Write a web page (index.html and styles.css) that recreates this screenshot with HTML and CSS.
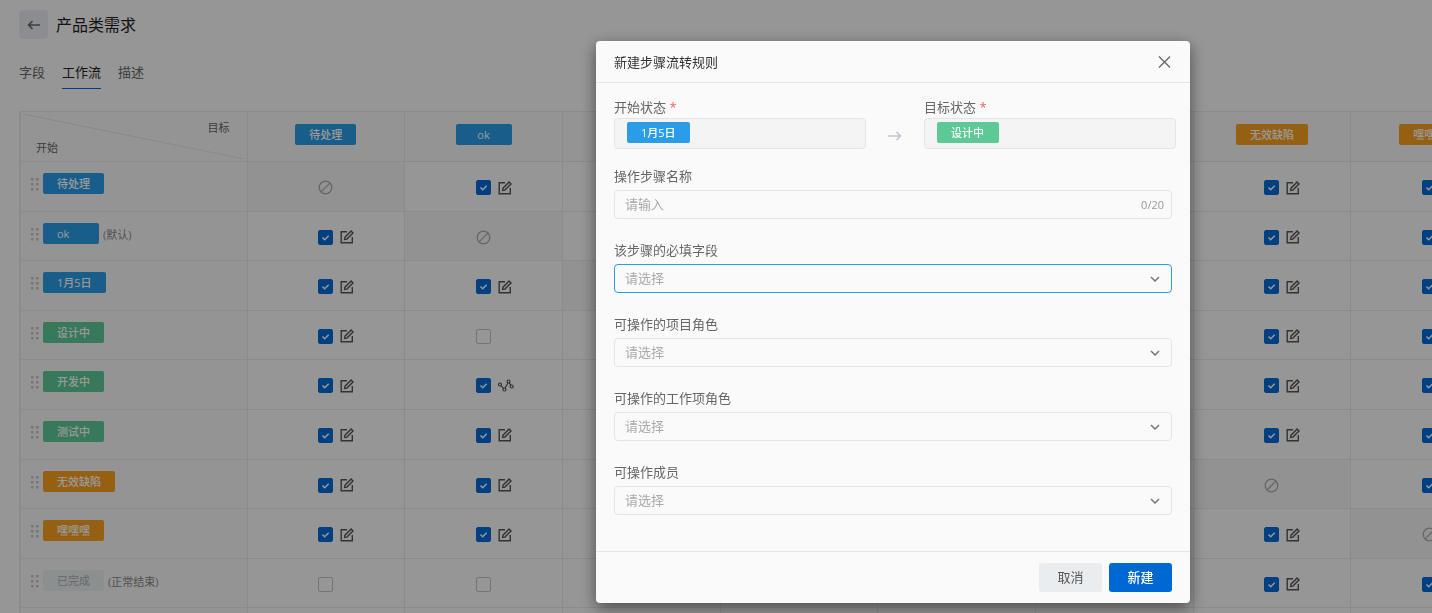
FILE: index.html
```html
<!DOCTYPE html>
<html lang="zh-CN">
<head>
    <meta charset="UTF-8">
    <meta name="viewport" content="width=device-width, initial-scale=1.0">
    <title>产品类需求 - 工作流</title>
    <link rel="stylesheet" href="styles.css">
</head>
<body>
    <div class="page">
        <header class="page-header">
            <button type="button" class="back" aria-label="返回">
                <svg width="14" height="12" viewBox="0 0 14 12"><path d="M13 6H1.5M5.5 2L1.5 6l4 4"/></svg>
            </button>
            <h1>产品类需求</h1>
        </header>
        <nav class="tabs">
            <a href="#fields">字段</a>
            <a href="#workflow" class="active">工作流</a>
            <a href="#desc">描述</a>
        </nav>
        <div class="table-wrap">
            <table class="flow">
                <thead>
                    <tr id="flow-head">
                        <th class="corner">
                            <div class="corner-inner">
                                <span class="corner-target">目标</span>
                                <span class="corner-start">开始</span>
                            </div>
                        </th>
                    </tr>
                </thead>
                <tbody id="flow-body"></tbody>
            </table>
        </div>
    </div>

    <div class="overlay">
        <form class="modal" role="dialog" aria-labelledby="modal-title">
            <div class="modal-header">
                <h2 id="modal-title">新建步骤流转规则</h2>
                <button type="button" class="close" aria-label="关闭">
                    <svg width="14" height="12" viewBox="0 0 14 12"><path d="M1 .5l11 11M12 .5l-11 11"/></svg>
                </button>
            </div>
            <div class="modal-body">
                <div class="states">
                    <div class="state">
                        <div class="label">开始状态 <span class="required">*</span></div>
                        <div class="state-box"><span class="tag blue">1月5日</span></div>
                    </div>
                    <svg class="arrow" width="14" height="10" viewBox="0 0 14 10"><path d="M0 5h12.500M8.500 1l4 4-4 4"/></svg>
                    <div class="state">
                        <div class="label">目标状态 <span class="required">*</span></div>
                        <div class="state-box"><span class="tag green">设计中</span></div>
                    </div>
                </div>
                <div class="field">
                    <label class="label" for="step-name">操作步骤名称</label>
                    <div class="control">
                        <input type="text" id="step-name" maxlength="20" placeholder="请输入">
                        <span class="count">0/20</span>
                    </div>
                </div>
                <div class="field">
                    <label class="label" for="required-fields">该步骤的必填字段</label>
                    <div class="control focused">
                        <select id="required-fields"><option>请选择</option></select>
                        <svg class="chevron" width="10" height="6" viewBox="0 0 10 6"><path d="M1 1l4 4 4-4"/></svg>
                    </div>
                </div>
                <div class="field">
                    <label class="label" for="project-role">可操作的项目角色</label>
                    <div class="control">
                        <select id="project-role"><option>请选择</option></select>
                        <svg class="chevron" width="10" height="6" viewBox="0 0 10 6"><path d="M1 1l4 4 4-4"/></svg>
                    </div>
                </div>
                <div class="field">
                    <label class="label" for="item-role">可操作的工作项角色</label>
                    <div class="control">
                        <select id="item-role"><option>请选择</option></select>
                        <svg class="chevron" width="10" height="6" viewBox="0 0 10 6"><path d="M1 1l4 4 4-4"/></svg>
                    </div>
                </div>
                <div class="field">
                    <label class="label" for="members">可操作成员</label>
                    <div class="control">
                        <select id="members"><option>请选择</option></select>
                        <svg class="chevron" width="10" height="6" viewBox="0 0 10 6"><path d="M1 1l4 4 4-4"/></svg>
                    </div>
                </div>
            </div>
            <div class="modal-footer">
                <button type="button" class="btn">取消</button>
                <button type="button" class="btn primary">新建</button>
            </div>
        </form>
    </div>
    <script src="script.js"></script>
</body>
</html>
```
FILE: styles.css
```css
* {
    box-sizing: border-box;
}
body {
    margin: 0;
    background-color: #fafafa;
    color: #333;
    font-family: 'Open Sans', 'Noto Sans CJK SC', sans-serif;
    font-size: 13px;
    line-height: 20px;
    overflow: hidden;
}
h1, h2 {
    margin: 0;
    font-weight: 400;
}
button, input, select {
    font: inherit;
}
svg {
    display: block;
    fill: none;
    stroke: currentColor;
}
.page {
    padding: 10px 0 0 19px;
}
.page-header {
    display: flex;
    align-items: center;
    gap: 8px;
}
.page-header h1 {
    font-size: 16px;
    line-height: 28px;
    color: #222;
}
.back {
    display: flex;
    align-items: center;
    justify-content: center;
    width: 29px;
    height: 29px;
    padding: 0;
    border: none;
    border-radius: 4px;
    background-color: #e9ecf0;
    color: #666;
}
.back svg {
    stroke-width: 1.6;
}
.tabs {
    display: flex;
    gap: 17px;
    margin: 23px 0 22px;
}
.tabs a {
    height: 27px;
    color: #666;
    text-decoration: none;
}
.tabs a.active {
    color: #222;
    border-bottom: 1px solid #006ad4;
}

/* transition matrix */
.table-wrap {
    overflow: hidden;
}
.flow {
    width: 1490px;
    height: 547px;
    table-layout: fixed;
    border-collapse: collapse;
    border-left: 2px solid #e4e9ea;
}
.flow th, .flow td {
    padding: 0;
    border: 1px solid #e8e8e8;
    font-weight: 400;
    vertical-align: top;
}
.flow thead th {
    height: 50px;
    padding-top: 12px;
    background-color: #f7f7f7;
    text-align: center;
}
.flow thead th.corner {
    width: 227px;
    padding: 2px 3px 2px 2px;
}
.flow tbody tr {
    height: 49px;
}
.corner-inner {
    display: flex;
    justify-content: space-between;
    flex-direction: column;
    height: 45px;
    padding: 4px 14px 1px 13px;
    font-size: 11px;
    color: #666;
    background: linear-gradient(to top right, transparent calc(50% - 1px), #e4e4e4 50%, transparent calc(50% + 1px));
}
.corner-target {
    align-self: flex-end;
}
.corner-start {
    align-self: flex-start;
}
.flow tbody th {
    background-color: #f7f7f7;
    text-align: left;
}
.row-name {
    display: flex;
    align-items: flex-start;
    padding: 11px 0 0 9px;
}
.drag {
    margin: 5px 4px 0 0;
    fill: #c4c5ca;
    stroke: none;
}
.note {
    margin: 2px 0 0 4px;
    font-size: 11px;
    color: #888;
}
.tag {
    display: inline-block;
    min-width: 56px;
    height: 21px;
    padding: 0 14px;
    border-radius: 2px;
    font-size: 11px;
    font-weight: 500;
    line-height: 21px;
    color: #fff;
    white-space: nowrap;
    vertical-align: top;
}
.blue {
    background-color: #2b9de8;
}
.green {
    background-color: #5dca96;
}
.orange {
    background-color: #f9a01f;
}
.gray {
    background-color: #e9eef0;
    color: #a8adb3;
    font-weight: 400;
}
.flow td.self {
    background-color: #f4f4f4;
}
.cell {
    display: grid;
    grid-template-columns: 1fr 15px 1fr;
    column-gap: 7px;
    align-items: center;
    padding-top: 18px;
    color: #555;
}
.cell > :first-child {
    grid-column: 2;
}
.cell input {
    appearance: none;
    width: 15px;
    height: 15px;
    margin: 0;
    border: 1px solid #c0c2c6;
    border-radius: 2px;
}
.cell input:checked {
    border-color: #006cd8;
    background: #006cd8 url("data:image/svg+xml,%3Csvg xmlns='http://www.w3.org/2000/svg' viewBox='0 0 13 13'%3E%3Cpath d='M3.500 6.500l2.200 2.200 4-4' fill='none' stroke='white' stroke-width='1.500'/%3E%3C/svg%3E");
}
.forbid {
    color: #aaa;
    stroke-width: 1.3;
}
.edit {
    stroke-width: 1.4;
}

/* dialog */
.overlay {
    position: fixed;
    inset: 0;
    display: flex;
    align-items: flex-start;
    justify-content: flex-end;
    padding: 41px 242px 0 0;
    background-color: rgba(0, 0, 0, 0.4);
}
.modal {
    width: 594px;
    border-radius: 4px;
    background-color: #fafafa;
    box-shadow: 0 5px 16px rgba(0, 0, 0, 0.5);
}
.modal-header {
    display: flex;
    align-items: center;
    justify-content: space-between;
    height: 42px;
    padding: 0 18px;
    border-bottom: 1px solid #e2e6ea;
}
.modal-header h2 {
    font-size: 13px;
}
.close {
    padding: 0;
    border: none;
    background: none;
    color: #666;
}
.close svg {
    stroke-width: 1.3;
}
.modal-body {
    padding: 15px 18px 36px;
}
.states {
    display: flex;
    justify-content: space-between;
    margin-right: -4px;
    margin-bottom: 18px;
}
.state {
    width: 252px;
}
.state-box {
    height: 31px;
    padding: 3px 12px;
    border: 1px solid #e5e5e5;
    border-radius: 4px;
    background-color: #f4f4f4;
}
.state-box .tag {
    min-width: 62px;
}
.arrow {
    margin-top: 33px;
    color: #c3c6cf;
    stroke-width: 1.6;
}
.label {
    display: block;
    height: 20px;
    line-height: 18px;
    color: #666;
}
.required {
    color: #f0655c;
}
.field + .field {
    margin-top: 22px;
}
.control {
    display: flex;
    align-items: center;
    height: 29px;
    margin-top: 3px;
    padding-right: 7px;
    border: 1px solid #e2e5e8;
    border-radius: 4px;
}
.control.focused {
    border-color: #2b9de8;
}
.control input, .control select {
    appearance: none;
    flex: 1;
    min-width: 0;
    height: 27px;
    padding: 0 0 1px 10px;
    border: none;
    outline: none;
    background: none;
    color: #aaa;
}
.control input::placeholder {
    color: #aaa;
}
.count {
    font-size: 11px;
    color: #999;
}
.chevron {
    margin-right: 4px;
    color: #777;
    stroke-width: 1.5;
    pointer-events: none;
}
.modal-footer {
    display: flex;
    justify-content: flex-end;
    gap: 7px;
    padding: 11px 18px;
    border-top: 1px solid #e5e5e5;
}
.btn {
    width: 63px;
    height: 29px;
    padding: 0 0 2px;
    border: none;
    border-radius: 3px;
    background-color: #e9edf0;
    color: #555;
    cursor: pointer;
}
.btn.primary {
    background-color: #0068d2;
    color: #fff;
    font-weight: 500;
}
```
FILE: script.js
```js
const states = [
    { name: '待处理', color: 'blue' },
    { name: 'ok', color: 'blue', note: '(默认)' },
    { name: '1月5日', color: 'blue' },
    { name: '设计中', color: 'green' },
    { name: '开发中', color: 'green' },
    { name: '测试中', color: 'green' },
    { name: '无效缺陷', color: 'orange' },
    { name: '嘿嘿嘿', color: 'orange' },
    { name: '已完成', color: 'gray', note: '(正常结束)' }
];
const columns = states.slice(0, 8);

// "row-column" pairs that differ from a checked transition
const unchecked = ['3-1', '8-0', '8-1'];
const branched = ['4-1'];

const dragIcon = '<svg class="drag" width="9" height="13" viewBox="0 0 9 13"><path d="M1 0h2.500v2.500H1zM6 0h2.500v2.500H6zM1 5h2.500v2.500H1zM6 5h2.500v2.500H6zM1 10h2.500v2.500H1zM6 10h2.500v2.500H6z"/></svg>';
const forbidIcon = '<svg class="forbid" width="15" height="15" viewBox="0 0 15 15"><circle cx="7.500" cy="7.500" r="6.300"/><path d="M3.100 11.900l8.800-8.800"/></svg>';
const editIcon = '<svg class="edit" width="14" height="14" viewBox="0 0 14 14"><path d="M7 1.700H1.200v11.100h11.100V7"/><path d="M4.600 9.500l.4-2.300 6.100-6.100 1.900 1.900-6.100 6.100z"/></svg>';
const branchIcon = '<svg width="16" height="14" viewBox="0 0 16 14" stroke-width="1.2"><circle cx="2" cy="5.500" r="1.500"/><circle cx="6.500" cy="10.500" r="1.500"/><circle cx="10.500" cy="2.500" r="1.500"/><circle cx="13.700" cy="7.500" r="1.500"/><path d="M3 6.700l2.500 2.600M7 9l3-5M11.300 3.900l1.500 2.300"/></svg>';

function tag(state) {
    return `<span class="tag ${state.color}">${state.name}</span>`;
}

function cell(row, col) {
    const key = `${row}-${col}`;
    if (row === col) {
        return `<td class="self"><div class="cell">${forbidIcon}</div></td>`;
    }
    const label = `${states[row].name} → ${columns[col].name}`;
    if (unchecked.includes(key)) {
        return `<td><div class="cell"><input type="checkbox" aria-label="${label}"></div></td>`;
    }
    const icon = branched.includes(key) ? branchIcon : editIcon;
    return `<td><div class="cell"><input type="checkbox" aria-label="${label}" checked>${icon}</div></td>`;
}

document.getElementById('flow-head').insertAdjacentHTML('beforeend',
    columns.map(state => `<th>${tag(state)}</th>`).join(''));

document.getElementById('flow-body').innerHTML = states.map((state, row) => `
    <tr>
        <th><div class="row-name">${dragIcon}${tag(state)}${state.note ? `<span class="note">${state.note}</span>` : ''}</div></th>
        ${columns.map((_, col) => cell(row, col)).join('')}
    </tr>`).join('') + `<tr><th></th>${columns.map(() => '<td></td>').join('')}</tr>`;
```
